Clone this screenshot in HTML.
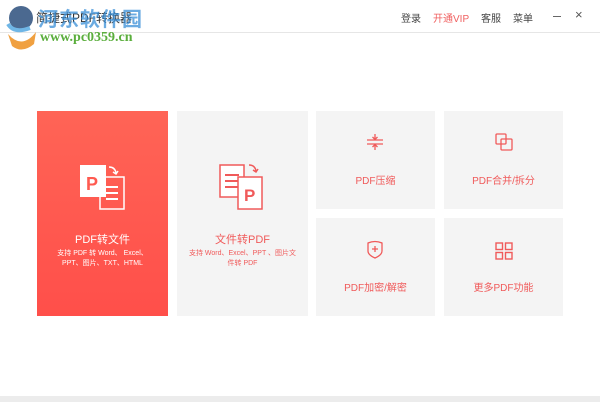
<!DOCTYPE html>
<html><head><meta charset="utf-8"><style>
*{margin:0;padding:0;box-sizing:border-box}
body{width:600px;height:402px;background:#fff;position:relative;overflow:hidden;font-family:"Liberation Sans","Noto Sans CJK SC",sans-serif}
.a{position:absolute}
.card{position:absolute;background:#f4f4f4;text-align:center;color:#f05a5a}
.t{font-size:10px}
</style></head><body>
<div class="a" style="left:0;top:32px;width:600px;height:1px;background:#e6e6e6"></div>
<div class="a" style="left:0;top:396px;width:600px;height:6px;background:#ececec"></div>
<!-- logo watermark -->
<svg class="a" style="left:4px;top:4px" width="36" height="46" viewBox="0 0 36 46"><circle cx="17" cy="14" r="12" fill="#2c4f7c" opacity=".85"/><path d="M4 30 Q18 46 32 28 L30 40 Q18 50 8 42Z" fill="#f0a040"/><path d="M4 20 Q10 30 26 24" stroke="#6fb6e6" stroke-width="4" fill="none"/></svg>
<div class="a" style="left:36px;top:9px;font-size:12px;color:#333">简捷式PDF转换器</div>
<div class="a" style="left:38px;top:3px;font-size:20px;font-weight:bold;color:#3a8fd8;opacity:.75;letter-spacing:1px">河东软件园</div>
<div class="a" style="left:40px;top:30px;font-size:14px;font-weight:bold;color:#5aae3c;font-family:'Liberation Serif',serif">www.pc0359.cn</div>
<div class="a" style="left:401px;top:10px;font-size:10px;color:#444">登录</div>
<div class="a" style="left:433px;top:10px;font-size:10px;color:#f06060">开通VIP</div>
<div class="a" style="left:481px;top:10px;font-size:10px;color:#444">客服</div>
<div class="a" style="left:513px;top:10px;font-size:10px;color:#444">菜单</div>
<div class="a" style="left:553px;top:16px;width:8px;height:1px;background:#666"></div>
<div class="a" style="left:575px;top:7px;font-size:13px;color:#555">×</div>

<div class="card" style="left:37px;top:111px;width:131px;height:205px;background:linear-gradient(#ff6456,#ff4f4a);color:#fff">
<svg style="position:absolute;left:41px;top:52px" width="48" height="48" viewBox="0 0 48 48"><rect x="22" y="14" width="24" height="32" fill="none" stroke="#fff" stroke-width="1.5"/><path d="M28 24h12M28 30h12M28 36h12" stroke="#fff" stroke-width="2"/><rect x="2" y="2" width="26" height="32" fill="#fff"/><text x="8" y="27" font-size="18" font-weight="bold" fill="#ff5a50" font-family="Liberation Sans">P</text><path d="M31 4q6 0 7 6" stroke="#fff" stroke-width="1.5" fill="none"/><path d="M35 9l3 2 2-3" stroke="#fff" stroke-width="1.5" fill="none"/></svg>
<div style="position:absolute;top:120px;width:100%;font-size:11px">PDF转文件</div>
<div style="position:absolute;top:138px;width:100%;font-size:7px;line-height:10px">支持 PDF 转 Word、 Excel、<br>PPT、图片、TXT、HTML</div>
</div>
<div class="card" style="left:177px;top:111px;width:131px;height:205px">
<svg style="position:absolute;left:41px;top:52px" width="48" height="48" viewBox="0 0 48 48"><rect x="2" y="2" width="24" height="32" fill="#fff" stroke="#f05a5a" stroke-width="1.5"/><path d="M7 12h14M7 18h14M7 24h14" stroke="#f05a5a" stroke-width="2"/><rect x="20" y="14" width="24" height="32" fill="#fff" stroke="#f05a5a" stroke-width="1.5"/><text x="26" y="38" font-size="17" font-weight="bold" fill="#f05a5a" font-family="Liberation Sans">P</text><path d="M31 2q6 0 7 6" stroke="#f05a5a" stroke-width="1.5" fill="none"/><path d="M35 7l3 2 2-3" stroke="#f05a5a" stroke-width="1.5" fill="none"/></svg>
<div style="position:absolute;top:120px;width:100%;font-size:11px">文件转PDF</div>
<div style="position:absolute;top:138px;width:100%;font-size:7px;line-height:10px">支持 Word、Excel、PPT 、图片文<br>件转 PDF</div>
</div>

<div class="card" style="left:316px;top:111px;width:119px;height:98px">
<svg style="position:absolute;left:50px;top:22px" width="18" height="18" viewBox="0 0 18 18" stroke="#f05a5a" stroke-width="1.3" fill="none"><path d="M1 7h16M1 11h16M9 1v5M9 12v5M6.5 4l2.5 2.5 2.5-2.5M6.5 14l2.5-2.5 2.5 2.5"/></svg>
<div class="t" style="position:absolute;top:61px;width:100%">PDF压缩</div></div>
<div class="card" style="left:444px;top:111px;width:119px;height:98px">
<svg style="position:absolute;left:51px;top:22px" width="18" height="18" viewBox="0 0 18 18" stroke="#f05a5a" stroke-width="1.3" fill="none"><rect x="1" y="1" width="10" height="10" rx="1"/><rect x="6" y="6" width="11" height="11" rx="1"/></svg>
<div class="t" style="position:absolute;top:61px;width:100%">PDF合并/拆分</div></div>
<div class="card" style="left:316px;top:218px;width:119px;height:98px">
<svg style="position:absolute;left:50px;top:22px" width="18" height="20" viewBox="0 0 18 20" stroke="#f05a5a" stroke-width="1.3" fill="none"><path d="M2 3q7-3 14 0v8q0 4-7 7q-7-3-7-7z"/><path d="M9 6v6M6 9h6"/></svg>
<div class="t" style="position:absolute;top:61px;width:100%">PDF加密/解密</div></div>
<div class="card" style="left:444px;top:218px;width:119px;height:98px">
<svg style="position:absolute;left:51px;top:24px" width="18" height="18" viewBox="0 0 18 18" stroke="#f05a5a" stroke-width="1.4" fill="none"><rect x="1" y="1" width="6.5" height="6.5"/><rect x="10.5" y="1" width="6.5" height="6.5"/><rect x="1" y="10.5" width="6.5" height="6.5"/><rect x="10.5" y="10.5" width="6.5" height="6.5"/></svg>
<div class="t" style="position:absolute;top:61px;width:100%">更多PDF功能</div></div>
</body></html>
